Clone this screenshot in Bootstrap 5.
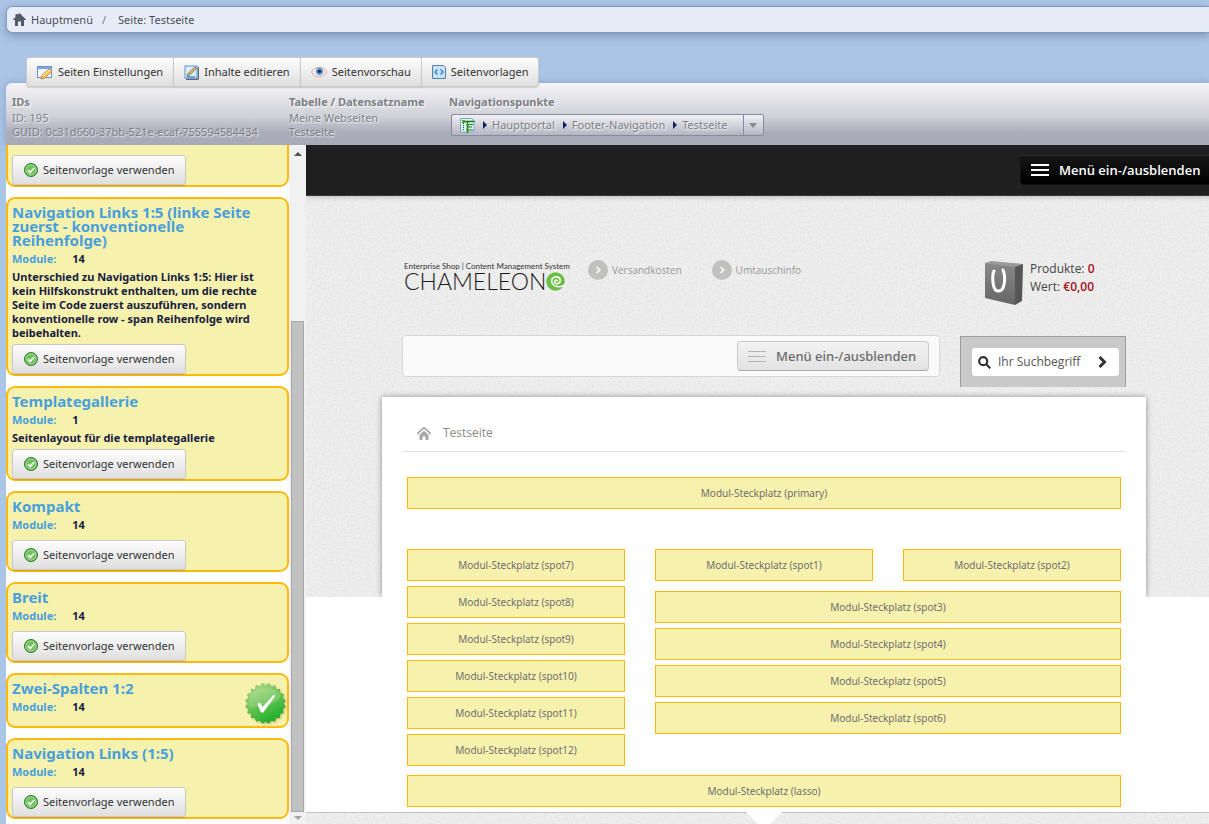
<!DOCTYPE html>
<html lang="de">
<head>
<meta charset="utf-8">
<meta name="viewport" content="width=device-width, initial-scale=1">
<title>Seite: Testseite</title>
<link href="https://cdn.jsdelivr.net/npm/bootstrap@5.3.0/dist/css/bootstrap.min.css" rel="stylesheet">
<style>
:root { --amber: #ffb80e; --pale: #f7f1ae; --ui: "Noto Sans", "Open Sans", sans-serif; --shop: "Open Sans", "Noto Sans", sans-serif; }
body { background: #abc5e7; font-family: var(--ui); font-size: 12px; line-height: 14px; color: #333; }
a { color: inherit; text-decoration: none; }
svg { display: block; flex: none; }

.crumb-bar { margin: 6px 0 0 6px; height: 27px; padding: 0 6px; gap: 5px; background: #e6edf8; border: 1px solid #8b97ad; border-right: 0; border-radius: 6px 0 0 6px; box-shadow: 0 3px 8px rgba(70,90,130,.45); color: #4a4f59; font-size: 11px; }
.crumb-bar .breadcrumb { --bs-breadcrumb-item-padding-x: 9px; --bs-breadcrumb-divider-color: #777; }
.crumb-bar .breadcrumb-item + .breadcrumb-item::before { padding-right: 12px; }
.crumb-bar .breadcrumb-item.active { color: #4a4f59; }

.tool-tabs { margin: 24px 0 -4px 26px; z-index: 2; }
.soft-btn { --bs-btn-font-size: 11px; --bs-btn-line-height: 14px; --bs-btn-color: #333; --bs-btn-border-color: #c9c9cb; --bs-btn-border-radius: 3px; --bs-btn-padding-x: 11px; --bs-btn-padding-y: 7px; background: linear-gradient(#fdfdfd, #dfdfdf); height: 30px; display: inline-flex; align-items: center; gap: 5px; box-shadow: 0 1px 1px rgba(0,0,0,.12); white-space: nowrap; }
.tool-tabs .soft-btn { flex: none; }
.tool-tabs .soft-btn { --bs-btn-padding-x: 10px; gap: 5px; }

.info-head { margin-left: 6px; padding: 12px 6px 6px; border-top-left-radius: 6px; background: linear-gradient(#f5f5f8 0, #cfcfd7 55%, #abacba 80%, #a9aab8); color: #7d7f84; text-shadow: 1px 1px 2px #fff; box-shadow: 0 0 8px rgba(70,90,130,.35); font-size: 11px; }
.info-head h2 { font-size: 11px; line-height: 14px; font-weight: 700; margin: 0 0 2px; }
.info-ids { width: 277px; }
.info-table { width: 160px; }
.path-box { height: 22px; margin: 5px 0 0 2px; border: 1px solid #858b9b; border-radius: 2px; background: linear-gradient(#f0f0f4, #b5b6c3); }
.path-box a { margin-left: 8px; display: flex; align-items: center; gap: 5px; }
.path-box a::before { content: ""; border: 4px solid transparent; border-left: 4px solid #17205c; border-right: 0; }
.path-box button { width: 20px; height: 20px; border: 0; border-left: 1px solid #858b9b; background: none; padding: 0; margin-left: 15px; }

.side-col { margin-left: 6px; width: 283px; background: #fff; padding-bottom: 5px; gap: 10px; }
.tpl { border: 2px solid var(--amber); border-radius: 9px; background: var(--pale); padding: 6px 20px 0 4px; color: #17203f; font-weight: 700; font-size: 11px; flex: none; position: relative; }
.tpl h3 { font-size: 15px; line-height: 14px; font-weight: 700; color: #489fdc; margin: 0 0 5px; }
.tpl dl { margin: 0; gap: 16px; }
.tpl dt { color: #489fdc; }
.tpl dd { margin: 0; }
.tpl p { margin: 4px 0; }
.tpl dl + .soft-btn { margin-top: 8px; }
.tpl-active { padding-bottom: 12px; }
.tpl-rolled { padding-top: 47px; }
.seal { position: absolute; right: 0; top: 7px; filter: drop-shadow(1px 1px 1px rgba(80,80,0,.35)); }

.track { width: 17px; background: #f1f1f1; }
.track .arrow { height: 17px; display: grid; place-items: center; flex: none; }
.track .gap { flex: 159; }
.track .thumb { flex: 491; margin: 0 2px; background: #c1c1c1; border: 1px solid #a8a8a8; }
.track .arrow:last-child { height: 12px; }

.preview { background: #fff; font-family: var(--shop); }
.shop { margin-right: -13px; }
.shop-top { height: 51px; background: #1f1f1f; border-bottom: 1px solid #383838; padding: 0 8px; z-index: 1; box-shadow: 0 0 6px rgba(0,0,0,.3); }
.dark-btn { height: 30px; width: 194px; border: 1px solid #111; border-top-color: #2d2d2d; border-radius: 4px; background: linear-gradient(#161616, #000); color: #fff; font-size: 13px; font-weight: 600; gap: 10px; padding: 0 10px; white-space: nowrap; }
.grain { background-color: #efefef; background-image: url("data:image/svg+xml,%3Csvg xmlns='http://www.w3.org/2000/svg' width='200' height='200'%3E%3Cfilter id='n'%3E%3CfeTurbulence type='fractalNoise' baseFrequency='.5' numOctaves='2' stitchTiles='stitch'/%3E%3CfeColorMatrix values='0 0 0 0 .5 0 0 0 0 .5 0 0 0 0 .5 .7 .5 0 0 -.5'/%3E%3C/filter%3E%3Crect width='200' height='200' filter='url(%23n)' opacity='.6'/%3E%3C/svg%3E"); }
.shop-head { height: 201px; }
.stage { position: relative; }
.wrap { width: 724px; max-width: 100%; margin: 0 auto; }
.head-row { padding-top: 64px; height: 139px; font-size: 10px; color: #999; }
.logo { color: #1a1a1a; width: 186px; padding: 1px 0 0 2px; }
.logo small { display: block; font: 8px/10px Lato, sans-serif; color: #333; white-space: nowrap; }
.logo strong { font: 300 23px/20px Lato, sans-serif; }
.info-link { gap: 4px; margin-right: 30px; }
.cart { font-size: 12px; line-height: 18px; color: #444; gap: 6px; width: 142px; }
.cart b { color: #a30f1c; font-weight: 600; }
.nav-box { width: 538px; height: 42px; border: 1px solid #d6d6d6; border-radius: 4px; background: #fafafa; padding: 5px 10px; }
.light-btn { height: 30px; width: 192px; border: 1px solid #c9c9c9; border-bottom-color: #aaa; border-radius: 4px; background: linear-gradient(#f3f3f3, #e2e2e2); color: #6c6c6c; font-size: 13px; font-weight: 500; gap: 10px; padding: 0 10px; white-space: nowrap; font-family: var(--ui); }
.search-box { width: 166px; height: 51px; margin-top: 1px; border: 1px solid #9d9d9d; border-bottom: 0; background: #c9c9c9; padding: 11px 6px 0 11px; }
.search-box form { height: 28px; background: #fff; border-radius: 3px; padding: 0 12px 0 6px; gap: 7px; }
.search-box input { border: 0; background: none; padding: 0; min-width: 0; font-size: 12px; outline: 0; color: #555; }
.search-box input::placeholder { color: #555; opacity: 1; }
.search-box button { border: 0; background: none; padding: 0; }
.sheet { position: relative; width: 764px; max-width: 100%; margin: 0 auto; padding: 0 20px 5px; background: #fff; }
.sheet::before { content: ""; position: absolute; inset: 0 0 auto; height: 200px; box-shadow: 0 0 6px rgba(0,0,0,.4); clip-path: inset(-12px -12px 0 -12px); pointer-events: none; }
.sheet-crumb { height: 55px; padding: 18px 15px 0; border-bottom: 1px solid #e4e4e4; gap: 12px; color: #888; margin-bottom: 25px; }
.slots { padding: 0 5px; font-family: var(--ui); }
.slots .row { --bs-gutter-x: 30px; }
.slot { height: 32px; border: 1px solid var(--amber); background: var(--pale); display: grid; place-items: center; color: #6f6f6f; font-size: 10px; margin-bottom: 5px; }
.slot-grid { margin-top: 40px; }
.slot-next { margin-top: 10px; }
.lower { border-top: 1px solid #c2c2c2; height: 40px; }
.lower::before { content: ""; display: block; width: 0; margin: -1px auto 0; border: 18px solid transparent; border-top-color: #fff; border-bottom: 0; }
.backdrop { position: absolute; inset: 0 0 auto; height: 401px; }
</style>
</head>
<body class="vh-100 overflow-hidden d-flex flex-column">
<svg class="d-none">
  <symbol id="ok" viewBox="0 0 14 14"><circle cx="7" cy="7" r="6.5" fill="#4aa83c" stroke="#2c7d2d"/><circle cx="7" cy="7" r="5.2" fill="#6fc159" stroke="#c4e6b8" stroke-width=".8"/><path d="M4 7.2l2.200 2.200L10.200 5" fill="none" stroke="#fff" stroke-width="1.700"/></symbol>
  <symbol id="go" viewBox="0 0 20 20"><circle cx="10" cy="10" r="10" fill="#c1c1bf"/><path d="M8.500 7l3.200 3-3.200 3" fill="none" stroke="#f2f2f2" stroke-width="1.800"/></symbol>
</svg>

<nav class="crumb-bar d-flex align-items-center flex-shrink-0" aria-label="Brotkrumen">
  <svg width="13" height="13" viewBox="0 0 13 13" fill="#555b66"><path d="M6.500 0L13 6.500V7h-2v6H8V8.500H5V13H2V7H0v-.5L2.500 4V1h2v1z"/></svg>
  <ol class="breadcrumb mb-0">
    <li class="breadcrumb-item"><a href="#">Hauptmenü</a></li>
    <li class="breadcrumb-item active" aria-current="page">Seite: Testseite</li>
  </ol>
</nav>

<div class="tool-tabs btn-group align-self-start flex-shrink-0">
  <button class="btn soft-btn" type="button"><svg width="16" height="15" viewBox="0 0 16 15"><rect x=".5" y="1.500" width="14" height="11" fill="#f4f8fd" stroke="#6c93c4"/><path d="M1 2h13v2H1z" fill="#79a9e0"/><path d="M4 14l1-4 7-6 3 2.500-7 6.500z" fill="#f6c55c" stroke="#b67e2c" stroke-width=".8"/><path d="M5.500 10.500L13 5" stroke="#fff0b0"/></svg>Seiten Einstellungen</button>
  <button class="btn soft-btn" type="button"><svg width="15" height="15" viewBox="0 0 15 15"><rect x="1" y="1" width="12" height="12" fill="#d9edfb" stroke="#5f8fc8"/><path d="M14.300 2v12.300H2" fill="none" stroke="#36475f"/><path d="M3 11l1-2.500L11 2l1.500 1.500-7 6.500z" fill="#f2c14c" stroke="#454e5a" stroke-width=".7"/><path d="M3 12h8" stroke="#4a92dc" stroke-width="1.500"/></svg>Inhalte editieren</button>
  <button class="btn soft-btn" type="button"><svg width="16" height="12" viewBox="0 0 16 12"><path d="M.5 6C3-.3 13-.3 15.500 6 13 12.300 3 12.300.5 6z" fill="#f9efe8" stroke="#dfa98d"/><circle cx="8.500" cy="5.300" r="3.600" fill="#5b93d8"/><circle cx="8.500" cy="5.300" r="1.600" fill="#15294e"/></svg>Seitenvorschau</button>
  <button class="btn soft-btn" type="button"><svg width="14" height="14" viewBox="0 0 14 14"><path d="M.5.500h11l2 2v11H.5z" fill="#c9e3fb" stroke="#5b7ea9"/><path d="M5.500 4.500L3 7l2.500 2.500M8.500 4.500L11 7 8.500 9.500" fill="none" stroke="#2b7ade" stroke-width="1.300"/></svg>Seitenvorlagen</button>
</div>

<header class="info-head d-flex flex-shrink-0">
  <div class="info-ids"><h2>IDs</h2>ID: 195<br>GUID: 0c31d660-37bb-521e-ecaf-755594584434</div>
  <div class="info-table"><h2>Tabelle / Datensatzname</h2>Meine Webseiten<br>Testseite</div>
  <div><h2>Navigationspunkte</h2>
    <div class="path-box d-flex align-items-center">
      <svg class="ms-2" width="15" height="15" viewBox="0 0 15 15"><path d="M.5.500h11l2.500 2V14H.5z" fill="#ddf0fb" stroke="#7fa6c4"/><path d="M2 3.500h12.500M7.500 4v11" stroke="#117a17" stroke-width="1.300"/><path d="M3.500 5v8" stroke="#1a5a1c" stroke-dasharray="1 1"/><path d="M8 6.500h5M8 9h4M8 12h5" stroke="#117a17"/><path d="M2 2h3v3H2zM6 6h3v2H6zM6 10.500h3v2H6z" fill="#53a51f"/></svg>
      <a href="#">Hauptportal</a><a href="#">Footer-Navigation</a><a href="#">Testseite</a>
      <button type="button" aria-label="Auswahl öffnen"><svg class="mx-auto" width="8" height="5"><path d="M0 0h8L4 5z" fill="#858b96"/></svg></button>
    </div>
  </div>
</header>

<main class="d-flex flex-grow-1 overflow-hidden">
  <aside class="side-col d-flex flex-column justify-content-end overflow-hidden flex-shrink-0">
    <section class="tpl tpl-rolled"><button class="btn soft-btn" type="button"><svg width="14" height="14"><use href="#ok"/></svg>Seitenvorlage verwenden</button></section>
    <section class="tpl"><h3>Navigation Links 1:5 (linke Seite zuerst - konventionelle Reihenfolge)</h3><dl class="d-flex"><dt>Module:</dt><dd>14</dd></dl><p>Unterschied zu Navigation Links 1:5: Hier ist kein Hilfskonstrukt enthalten, um die rechte Seite im Code zuerst auszuführen, sondern konventionelle row - span Reihenfolge wird beibehalten.</p><button class="btn soft-btn" type="button"><svg width="14" height="14"><use href="#ok"/></svg>Seitenvorlage verwenden</button></section>
    <section class="tpl"><h3>Templategallerie</h3><dl class="d-flex"><dt>Module:</dt><dd>1</dd></dl><p>Seitenlayout für die templategallerie</p><button class="btn soft-btn" type="button"><svg width="14" height="14"><use href="#ok"/></svg>Seitenvorlage verwenden</button></section>
    <section class="tpl"><h3>Kompakt</h3><dl class="d-flex"><dt>Module:</dt><dd>14</dd></dl><button class="btn soft-btn" type="button"><svg width="14" height="14"><use href="#ok"/></svg>Seitenvorlage verwenden</button></section>
    <section class="tpl"><h3>Breit</h3><dl class="d-flex"><dt>Module:</dt><dd>14</dd></dl><button class="btn soft-btn" type="button"><svg width="14" height="14"><use href="#ok"/></svg>Seitenvorlage verwenden</button></section>
    <section class="tpl tpl-active"><h3>Zwei-Spalten 1:2</h3><dl class="d-flex"><dt>Module:</dt><dd>14</dd></dl>
      <svg class="seal" width="43" height="43" viewBox="0 0 43 43"><defs><linearGradient id="sg" x1="0" y1="0" x2=".5" y2="1"><stop offset="0" stop-color="#b9e18c"/><stop offset=".5" stop-color="#72c55a"/><stop offset="1" stop-color="#22b02c"/></linearGradient>
        <clipPath id="star"><rect x="7" y="7" width="29" height="29"/><rect x="7" y="7" width="29" height="29" transform="rotate(18 21.500 21.500)"/><rect x="7" y="7" width="29" height="29" transform="rotate(36 21.500 21.500)"/><rect x="7" y="7" width="29" height="29" transform="rotate(54 21.500 21.500)"/><rect x="7" y="7" width="29" height="29" transform="rotate(72 21.500 21.500)"/></clipPath></defs>
        <g clip-path="url(#star)"><rect width="43" height="43" fill="#47a53c"/><circle cx="21.500" cy="21.500" r="19.500" fill="url(#sg)"/></g><path d="M5 24C12 27 31 24 37 14 31 4 12 3 6 14z" fill="#fff" opacity=".15"/><path d="M13.500 22c2-2 3.500-.5 5 3L29 13.500c1.500-1 2.500 0 1.500 1.500L20 29.500c-1 1.500-2.500 1.500-3.500 0z" fill="#fff"/></svg></section>
    <section class="tpl"><h3>Navigation Links (1:5)</h3><dl class="d-flex"><dt>Module:</dt><dd>14</dd></dl><button class="btn soft-btn" type="button"><svg width="14" height="14"><use href="#ok"/></svg>Seitenvorlage verwenden</button></section>
  </aside>
  <div class="track d-flex flex-column flex-shrink-0" aria-hidden="true">
    <div class="arrow"><svg width="8" height="4"><path d="M0 4h8L4 0z" fill="#505050"/></svg></div>
    <div class="gap"></div><div class="thumb"></div>
    <div class="arrow"><svg width="8" height="4"><path d="M0 0h8L4 4z" fill="#a3a3a3"/></svg></div>
  </div>

  <div class="preview flex-grow-1 overflow-hidden">
    <div class="shop">
      <div class="shop-top d-flex align-items-center justify-content-end position-relative">
        <button class="dark-btn d-flex align-items-center" type="button"><svg width="18" height="12" stroke="#fff" stroke-width="2"><path d="M0 1h18M0 6h18M0 11h18"/></svg>Menü ein-/ausblenden</button>
      </div>
      <div class="stage">
        <div class="backdrop grain"></div>
        <div class="shop-head position-relative">
          <div class="wrap head-row d-flex align-items-start">
            <a class="logo" href="#"><small>Enterprise Shop | Content Management System</small>
              <span class="d-flex align-items-center"><strong>CHAMELEON</strong><svg width="19" height="19" viewBox="0 0 20 20"><circle cx="10" cy="10" r="9.800" fill="#6cbf45"/><path d="M20 13.500c-4 3-13 3-14-3.500C5.500 5 13 3 15 8c1 4-5 6-6 2.500C9 8 12 8 12 10" fill="none" stroke="#fff" stroke-width="1.600"/></svg></span></a>
            <a class="info-link d-flex align-items-center" href="#"><svg width="20" height="20"><use href="#go"/></svg>Versandkosten</a>
            <a class="info-link d-flex align-items-center" href="#"><svg width="20" height="20"><use href="#go"/></svg>Umtauschinfo</a>
            <a class="cart d-flex ms-auto" href="#"><svg width="40" height="46" viewBox="0 0 40 46"><defs><linearGradient id="bg" x1="0" y1="0" x2="0" y2="1"><stop offset="0" stop-color="#888"/><stop offset="1" stop-color="#666"/></linearGradient></defs><path d="M1 3l6-2 32 3-8 5z" fill="#9a9a9a"/><path d="M1 3l30 4v38L1 38z" fill="url(#bg)"/><path d="M31 7l8-3-1 37-7 4z" fill="#565656"/><path d="M10 11c-2 4-2 20 4 20 7 1 8-14 5-21" fill="none" stroke="#fff" stroke-width="3" stroke-linecap="round"/></svg><span>Produkte: <b>0</b><br>Wert: <b>€0,00</b></span></a>
          </div>
          <div class="wrap d-flex justify-content-between">
            <div class="nav-box d-flex justify-content-end"><button class="light-btn d-flex align-items-center" type="button"><svg width="18" height="12" stroke="#b5b5b5"><path d="M0 1.500h18M0 6.500h18M0 11.500h18"/></svg>Menü ein-/ausblenden</button></div>
            <div class="search-box"><form class="d-flex align-items-center"><svg width="13" height="13" viewBox="0 0 13 13" fill="none" stroke="#333" stroke-width="2.200"><circle cx="5.200" cy="5.200" r="4"/><path d="M8 8l4.300 4.300"/></svg><input class="flex-grow-1" type="text" aria-label="Suche" placeholder="Ihr Suchbegriff"><button type="submit" aria-label="Suchen"><svg width="9" height="12" viewBox="0 0 9 12" fill="none" stroke="#333" stroke-width="3"><path d="M1.500 1l5 5-5 5"/></svg></button></form></div>
          </div>
        </div>
        <div class="sheet">
          <div class="sheet-crumb d-flex align-items-center"><a href="#" aria-label="Start"><svg width="14" height="13" viewBox="0 0 14 13"><path d="M0 7l7-6.500L14 7" fill="none" stroke="#a9a9a9" stroke-width="1.800"/><path d="M2.500 7.800L7 3.800l4.500 4V13H8.500V9.500h-3V13h-3z" fill="#a9a9a9"/></svg></a><span>Testseite</span></div>
          <div class="slots">
            <div class="slot">Modul-Steckplatz (primary)</div>
            <div class="row slot-grid">
              <div class="col-4"><div class="slot">Modul-Steckplatz (spot7)</div><div class="slot">Modul-Steckplatz (spot8)</div><div class="slot">Modul-Steckplatz (spot9)</div><div class="slot">Modul-Steckplatz (spot10)</div><div class="slot">Modul-Steckplatz (spot11)</div><div class="slot">Modul-Steckplatz (spot12)</div></div>
              <div class="col-8">
                <div class="row"><div class="col-6"><div class="slot mb-0">Modul-Steckplatz (spot1)</div></div><div class="col-6"><div class="slot mb-0">Modul-Steckplatz (spot2)</div></div></div>
                <div class="slot slot-next">Modul-Steckplatz (spot3)</div><div class="slot">Modul-Steckplatz (spot4)</div><div class="slot">Modul-Steckplatz (spot5)</div><div class="slot">Modul-Steckplatz (spot6)</div>
              </div>
            </div>
            <div class="slot mt-1 mb-0">Modul-Steckplatz (lasso)</div>
          </div>
        </div>
        <div class="lower grain"></div>
      </div>
    </div>
  </div>
</main>
<script src="https://cdn.jsdelivr.net/npm/bootstrap@5.3.0/dist/js/bootstrap.bundle.min.js"></script>
</body>
</html>
